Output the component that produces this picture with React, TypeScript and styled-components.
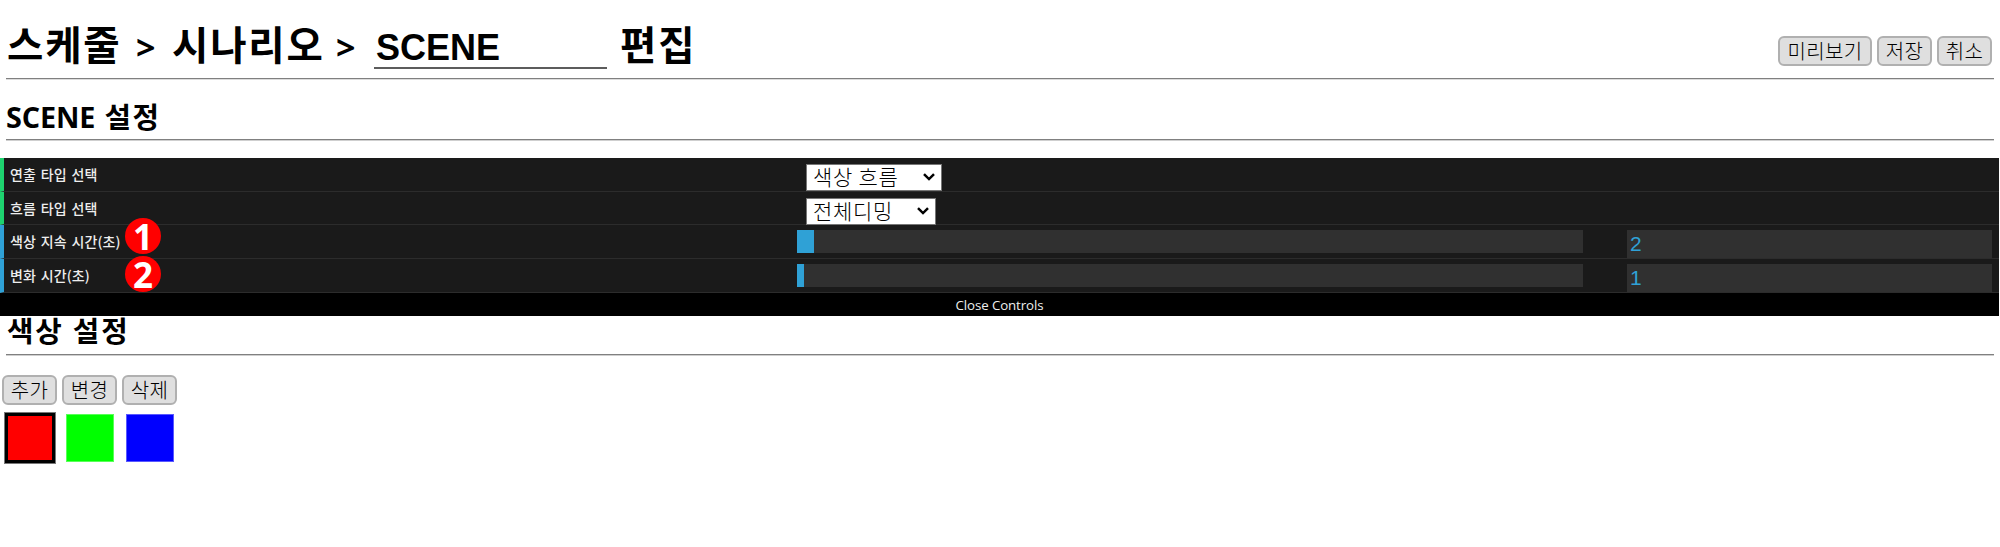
import React from "react";
import styled, { createGlobalStyle } from "styled-components";

const GlobalStyle = createGlobalStyle`
  * { box-sizing: border-box; }
  body {
    margin: 0;
    background: #fff;
    color: #000;
    font-family: "Open Sans", "Noto Sans CJK KR", sans-serif;
  }
`;

const Page = styled.main`
  width: 2000px;
  height: 547px;
  overflow: hidden;
  white-space: nowrap;
`;

const Header = styled.header`
  display: flex;
  justify-content: space-between;
  height: 79px;
  margin: 0 6px 1px;
  border-bottom: 1px solid #808080;
  box-shadow: 0 1px #dcdcdc;
`;

const Title = styled.h1`
  display: flex;
  margin: 0;
  padding: 13px 0 0 1px;
  font-size: 39.5px;
  line-height: 60px;
  font-weight: 700;
  font-family: "Noto Sans CJK KR", sans-serif;
`;

const Crumb = styled.span<{ $width: number }>`
  width: ${(p) => p.$width}px;
  letter-spacing: 1.8px;
`;

const Separator = styled.span<{ $width: number }>`
  width: ${(p) => p.$width}px;
  padding-top: 4px;
  font-family: "Open Sans", sans-serif;
  font-size: 34px;
`;

const NameInput = styled.input`
  width: 233px;
  height: 44px;
  margin: 12px 13px 0 0;
  padding: 3px 2px 0;
  border: 0;
  border-bottom: 2px solid #5c5c5c;
  outline: 0;
  background: transparent;
  color: #000;
  font: 700 36px "Liberation Sans", sans-serif;
`;

const Actions = styled.div<{ $top: number; $right?: number }>`
  display: flex;
  gap: 5px;
  margin-top: ${(p) => p.$top}px;
  margin-right: ${(p) => p.$right ?? 0}px;
`;

const Button = styled.button<{ $width?: number }>`
  width: ${(p) => p.$width ?? 55}px;
  height: 30px;
  padding: 0;
  border: 2px solid #b0b0b0;
  border-radius: 6px;
  background: #dfdfdf;
  color: #000;
  font: 300 20px/26px "Noto Sans CJK KR", sans-serif;
  letter-spacing: 0.3px;
`;

const SectionTitle = styled.h2<{ $height: number }>`
  display: flex;
  align-items: flex-end;
  height: ${(p) => p.$height}px;
  margin: 0 6px;
  padding-bottom: 2px;
  border-bottom: 1px solid #808080;
  box-shadow: 0 1px #cfcfcf;
  font-size: 28.8px;
  line-height: 40px;
  font-weight: 700;
  font-family: "Open Sans", "Noto Sans CJK KR", sans-serif;
`;

const TitleWord = styled.span<{ $spacing: number; $indent?: number; $lift?: number }>`
  margin-left: ${(p) => p.$indent ?? 0}px;
  margin-bottom: ${(p) => p.$lift ?? 0}px;
  letter-spacing: ${(p) => p.$spacing}px;
`;

const Panel = styled.section`
  position: relative;
  z-index: 1;
  width: 1999px;
  margin-top: 18px;
  background: #1a1a1a;
`;

const Row = styled.div<{ $accent: string; $height: number }>`
  display: grid;
  grid-template-columns: 793px 1fr;
  height: ${(p) => p.$height}px;
  border-left: 4px solid ${(p) => p.$accent};
  border-bottom: 1px solid #2c2c2c;
`;

const Label = styled.span`
  padding-left: 6px;
  color: #eee;
  font: 500 14px/33px "Noto Sans CJK KR", sans-serif;
  letter-spacing: 0.1px;
  word-spacing: 1.5px;
`;

const SelectBox = styled.div<{ $width: number }>`
  display: flex;
  align-items: center;
  justify-content: space-between;
  width: ${(p) => p.$width}px;
  height: 27px;
  margin: 6px 0 0 9px;
  padding: 0 6px 2px 6px;
  border: 1px solid #767676;
  background: #fff;
  color: #000;
  font: 300 21px/23px "Noto Sans CJK KR", sans-serif;
  letter-spacing: 0.7px;
`;

const Control = styled.div`
  display: flex;
  justify-content: space-between;
  padding: 5px 7px 0 0;
`;

const Track = styled.div`
  width: 786px;
  height: 23px;
  background: #303030;
`;

const Fill = styled.div<{ $width: number }>`
  width: ${(p) => p.$width}px;
  height: 100%;
  background: #2fa1d6;
`;

const NumberInput = styled.input`
  width: 365px;
  height: 28px;
  padding: 0 3px;
  border: 0;
  outline: 0;
  background: #303030;
  color: #2fa1d6;
  font: 21px "Liberation Sans", sans-serif;
`;

const CloseBar = styled.div`
  height: 23px;
  background: #000;
  color: #eee;
  text-align: center;
  font: 13.3px/24px "Open Sans", sans-serif;
  letter-spacing: -0.1px;
`;

const Badge = styled.span<{ $top: number }>`
  position: absolute;
  left: 125px;
  top: ${(p) => p.$top}px;
  width: 36px;
  height: 36px;
  border-radius: 50%;
  background: #f00;
  color: #fff;
  text-align: center;
  font: 700 35px/38px "Open Sans", sans-serif;
`;

const ColorArea = styled.div`
  padding-left: 2px;
`;

const Swatches = styled.div`
  display: flex;
  align-items: center;
  gap: 12px;
  height: 52px;
  margin: 7px 0 0 2px;
`;

const Swatch = styled.div<{ $color: string; $selected?: boolean }>`
  width: ${(p) => (p.$selected ? 52 : 48)}px;
  height: ${(p) => (p.$selected ? 52 : 48)}px;
  margin-right: ${(p) => (p.$selected ? -2 : 0)}px;
  border: ${(p) => (p.$selected ? "1px solid #777" : "1px solid rgba(255,255,255,.35)")};
  box-shadow: ${(p) => (p.$selected ? "inset 0 0 0 3px #000" : "none")};
  background: ${(p) => p.$color};
`;

const Chevron = () => (
  <svg width="12" height="8" viewBox="0 0 12 8" fill="none" stroke="#000" strokeWidth="2.5">
    <path d="M1 1.2 6 6.1 11 1.2" />
  </svg>
);

const selects = [
  { label: "연출 타입 선택", value: "색상 흐름", width: 136, height: 34 },
  { label: "흐름 타입 선택", value: "전체디밍", width: 130, height: 33 },
];

const sliders = [
  { label: "색상 지속 시간(초)", value: "2", fill: 17, height: 34 },
  { label: "변화 시간(초)", value: "1", fill: 7, height: 34 },
];

export default function App() {
  return (
    <Page>
      <GlobalStyle />
      <Header>
        <Title>
          <Crumb $width={129}>스케줄</Crumb>
          <Separator $width={36}>&gt;</Separator>
          <Crumb $width={164}>시나리오</Crumb>
          <Separator $width={38}>&gt;</Separator>
          <NameInput defaultValue="SCENE" aria-label="SCENE" />
          <Crumb $width={80}>편집</Crumb>
        </Title>
        <Actions $top={36} $right={2}>
          <Button $width={94}>미리보기</Button>
          <Button>저장</Button>
          <Button>취소</Button>
        </Actions>
      </Header>
      <SectionTitle $height={60}>
        <TitleWord $spacing={-0.1}>SCENE</TitleWord>
        <TitleWord $spacing={1.5} $indent={9}>설정</TitleWord>
      </SectionTitle>
      <Panel>
        {selects.map((s) => (
          <Row key={s.label} $accent="#1ed36f" $height={s.height}>
            <Label>{s.label}</Label>
            <SelectBox $width={s.width}>
              {s.value}
              <Chevron />
            </SelectBox>
          </Row>
        ))}
        {sliders.map((s) => (
          <Row key={s.label} $accent="#2fa1d6" $height={s.height}>
            <Label>{s.label}</Label>
            <Control>
              <Track>
                <Fill $width={s.fill} />
              </Track>
              <NumberInput defaultValue={s.value} aria-label={s.label} />
            </Control>
          </Row>
        ))}
        <CloseBar>Close Controls</CloseBar>
        <Badge $top={60}>1</Badge>
        <Badge $top={98}>2</Badge>
      </Panel>
      <SectionTitle $height={39}>
        <TitleWord $spacing={1.8} $indent={1} $lift={1}>색상 설정</TitleWord>
      </SectionTitle>
      <ColorArea>
        <Actions $top={20}>
          <Button>추가</Button>
          <Button>변경</Button>
          <Button>삭제</Button>
        </Actions>
        <Swatches>
          <Swatch $color="#f00" $selected />
          <Swatch $color="#0f0" />
          <Swatch $color="#00f" />
        </Swatches>
      </ColorArea>
    </Page>
  );
}
